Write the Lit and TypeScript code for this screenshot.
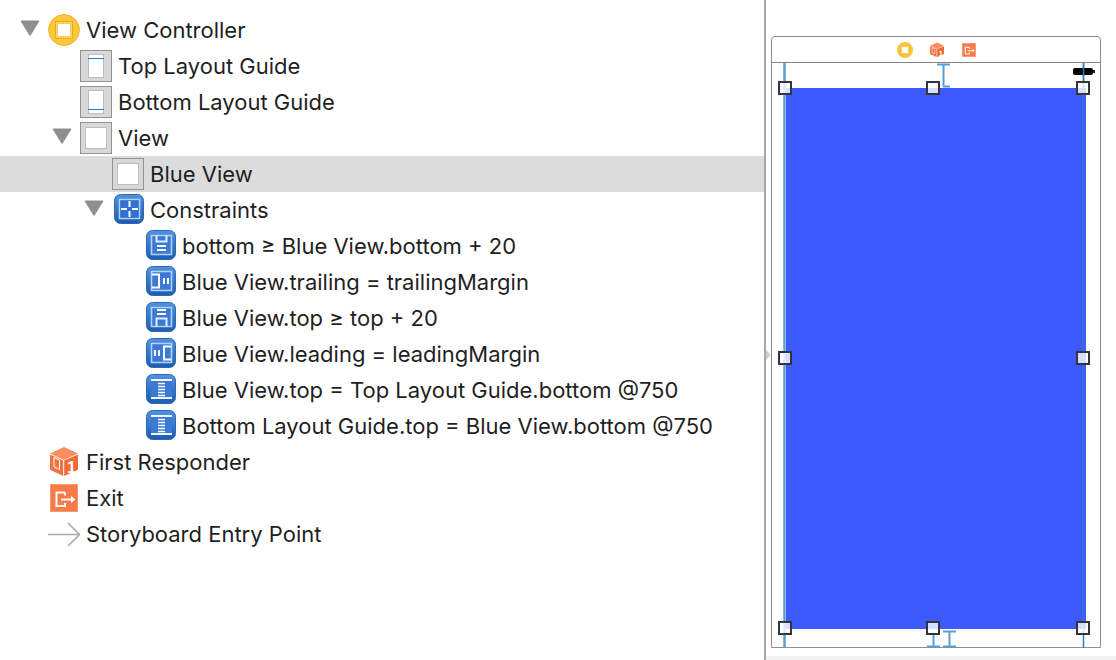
import { LitElement, css, html, svg } from 'lit';
import { customElement } from 'lit/decorators.js';

const blue = (inner: unknown) => html`<svg class="icon" viewBox="0 0 32 32" aria-hidden="true">
  <defs>
    <linearGradient id="bg" x1="0" y1="0" x2="0" y2="1">
      <stop offset="0" stop-color="#4f93e2" />
      <stop offset="1" stop-color="#1d5cae" />
    </linearGradient>
  </defs>
  <rect x="2.5" y="0.5" width="29" height="29" rx="6" fill="url(#bg)" stroke="#2a69ba" />
  <rect x="7" y="5" width="21" height="20" fill="#3a7ad6" />
  ${inner}
</svg>`;

const FRAME = svg`<path d="M7.5 5.500h20v19h-20z" fill="none" stroke="#b5d0f0" stroke-width="1.600" />`;

const CONSTRAINT_ICONS: Record<string, unknown> = {
  plus: svg`
    ${FRAME}
    <rect x="8.500" y="6.500" width="18" height="17" fill="#2f72cf" />
    <path d="M17.500 7v6M17.500 17v6M9 15h6M20 15h6" stroke="#fff" stroke-width="2" fill="none" />`,
  bottomGe: svg`
    ${FRAME}
    <path d="M12.500 5.500v6h10v-6" fill="none" stroke="#e4eefb" stroke-width="2" />
    <path d="M13 16h9M13 20h9" stroke="#fff" stroke-width="2" />`,
  topGe: svg`
    ${FRAME}
    <path d="M13 8h9M13 12h9" stroke="#fff" stroke-width="2" />
    <path d="M12.500 24.500v-8h10v8" fill="none" stroke="#e4eefb" stroke-width="2" />`,
  trailing: svg`
    ${FRAME}
    <path d="M8 8.500h7v13h-7" fill="none" stroke="#fff" stroke-width="2" />
    <path d="M20 12v6M24 12v6" stroke="#fff" stroke-width="2" />`,
  leading: svg`
    ${FRAME}
    <path d="M27 8.500h-7v13h7" fill="none" stroke="#fff" stroke-width="2" />
    <path d="M11 12v6M15 12v6" stroke="#fff" stroke-width="2" />`,
  beam: svg`
    <path d="M7 6h21M7 24h21" stroke="#f2f7fd" stroke-width="2" />
    <path d="M14 9.500h7M14 12.500h7M14 15.500h7M14 18.500h7M14 21.500h7" stroke="#fff" stroke-width="1.400" />`,
};

const grayBox = (inner: unknown) => html`<svg class="icon" viewBox="0 0 32 32" aria-hidden="true">
  <rect x="0.500" y="0.500" width="31" height="31" fill="#d8d8d8" stroke="#929292" />
  ${inner}
</svg>`;

const viewIcon = grayBox(svg`<rect x="5.500" y="5.500" width="21" height="21" fill="#fff" stroke="#bcbcbc" />`);
const topGuide = grayBox(svg`<rect x="8.500" y="4.500" width="15" height="23" fill="#fff" stroke="#bcbcbc" /><path d="M8 8.500h16" stroke="#2d76b8" />`);
const bottomGuide = grayBox(svg`<rect x="8.500" y="4.500" width="15" height="23" fill="#fff" stroke="#bcbcbc" /><path d="M8 23.500h16" stroke="#2d76b8" />`);

const controllerIcon = html`<svg class="icon" viewBox="0 0 32 32" aria-hidden="true">
  <circle cx="16" cy="16" r="15.400" fill="#fdc936" stroke="#eeae33" />
  <rect x="7.500" y="7.500" width="17" height="17" fill="#fcd55f" stroke="#e6aa2c" />
  <rect x="9.500" y="9.500" width="13" height="13" fill="#fff" stroke="#eeb02f" stroke-dasharray="1.500 1" />
</svg>`;

const cubeIcon = html`<svg class="icon" viewBox="0 0 32 32" aria-hidden="true">
  <path d="M16 1l14 6.500-14 6.500-14-6.500z" fill="#fb8d60" />
  <path d="M2 8.500l13.200 6.100v15.400l-13.200-6.200z" fill="#f6733f" />
  <path d="M30 8.500l-13.800 6.100v15.400l13.800-6.200z" fill="#f26a36" />
  <path d="M6 11.500l5.500 2.600v9.400l-5.500-2.600z" fill="none" stroke="#fff" />
  <text x="19" y="27" font-size="16" font-weight="700" fill="#fff" font-family="Liberation Sans, sans-serif">1</text>
</svg>`;

const exitIcon = html`<svg class="icon" viewBox="0 0 32 32" aria-hidden="true">
  <rect x="2.500" y="2.500" width="27" height="27" fill="#f87a49" stroke="#fb9a70" />
  <path d="M17 10.500h-8.500v13.500h8.500v-3M17 10.500v3" fill="none" stroke="#fff" stroke-width="2" />
  <path d="M13 17.500h11" stroke="#fff" stroke-width="2" />
  <path d="M23 14l4.500 3.500-4.500 3.500z" fill="#fff" />
</svg>`;

const entryIcon = html`<svg class="icon" viewBox="0 0 32 32" aria-hidden="true">
  <path d="M0 16.500h31M20 5l11.500 11.500-11.500 11.500" fill="none" stroke="#ababab" stroke-width="1.600" />
</svg>`;

interface Row {
  depth: number;
  label: string;
  icon: unknown;
  open?: boolean;
  selected?: boolean;
}

const ROWS: Row[] = [
  { depth: 0, label: 'View Controller', icon: controllerIcon, open: true },
  { depth: 1, label: 'Top Layout Guide', icon: topGuide },
  { depth: 1, label: 'Bottom Layout Guide', icon: bottomGuide },
  { depth: 1, label: 'View', icon: viewIcon, open: true },
  { depth: 2, label: 'Blue View', icon: viewIcon, selected: true },
  { depth: 2, label: 'Constraints', icon: blue(CONSTRAINT_ICONS.plus), open: true },
  { depth: 3, label: 'bottom ≥ Blue View.bottom + 20', icon: blue(CONSTRAINT_ICONS.bottomGe) },
  { depth: 3, label: 'Blue View.trailing = trailingMargin', icon: blue(CONSTRAINT_ICONS.trailing) },
  { depth: 3, label: 'Blue View.top ≥ top + 20', icon: blue(CONSTRAINT_ICONS.topGe) },
  { depth: 3, label: 'Blue View.leading = leadingMargin', icon: blue(CONSTRAINT_ICONS.leading) },
  { depth: 3, label: 'Blue View.top = Top Layout Guide.bottom @750', icon: blue(CONSTRAINT_ICONS.beam) },
  { depth: 3, label: 'Bottom Layout Guide.top = Blue View.bottom @750', icon: blue(CONSTRAINT_ICONS.beam) },
  { depth: 0, label: 'First Responder', icon: cubeIcon },
  { depth: 0, label: 'Exit', icon: exitIcon },
  { depth: 0, label: 'Storyboard Entry Point', icon: entryIcon },
];

// handle positions, relative to the canvas (x from 766, y from 0)
const HANDLES = [
  [19, 88], [167, 88], [317, 88],
  [19, 358], [317, 358],
  [19, 628], [167, 628], [317, 628],
];

@customElement('app-root')
export class AppRoot extends LitElement {
  static styles = css`
    :host {
      display: block;
      width: 1116px;
      height: 660px;
      overflow: hidden;
      background: #fff;
      font-family: Inter, "Liberation Sans", sans-serif;
      color: #1f1f1f;
    }

    .page {
      display: grid;
      grid-template-columns: 764px 2px 1fr;
      height: 660px;
    }

    .tree {
      padding-top: 12px;
    }

    .row {
      display: flex;
      align-items: center;
      height: 36px;
      box-sizing: border-box;
    }

    .row.selected {
      background: #dcdcdc;
    }

    .twisty {
      width: 32px;
      height: 32px;
      flex: none;
    }

    .icon {
      width: 32px;
      height: 32px;
      flex: none;
      display: block;
    }

    .label {
      margin-left: 6px;
      font-size: 22px;
      white-space: nowrap;
    }

    .divider {
      background: #a8a8a8;
    }

    .canvas {
      position: relative;
      padding: 36px 15px 0 5px;
    }

    .band {
      position: absolute;
      left: 0;
      right: 0;
      top: 656px;
      bottom: 0;
      background: #f2f2f2;
    }

    .grip {
      position: absolute;
      left: 0;
      top: 350px;
      border-left: 5px solid #cfcfcf;
      border-top: 5px solid transparent;
      border-bottom: 5px solid transparent;
    }

    .frame {
      box-sizing: border-box;
      width: 330px;
      height: 612px;
      border: 1.5px solid #8f8f8f;
      border-top-width: 1px;
      border-radius: 4px 4px 0 0;
      display: flex;
      flex-direction: column;
    }

    .dock {
      height: 25px;
      flex: none;
      border-bottom: 1.5px solid #858585;
    }

    .dock-icons {
      display: flex;
      align-items: center;
      justify-content: center;
      gap: 16px;
      height: 100%;
      padding-left: 2px;
      filter: blur(0.3px);
    }

    .dock-icons .icon {
      width: 16px;
      height: 16px;
    }

    .screen {
      flex: 1;
      padding: 25px 14px 18px 14px;
    }

    .blue {
      height: 100%;
      background: #3d5afe;
    }

    .overlay {
      position: absolute;
      inset: 0;
      width: 100%;
      height: 100%;
      pointer-events: none;
      filter: blur(0.3px);
    }

    .handle {
      position: absolute;
      box-sizing: border-box;
      width: 14px;
      height: 14px;
      margin: -7px 0 0 -7px;
      border: 2px solid #34343c;
      background: rgba(255, 255, 255, 0.8);
      filter: blur(0.4px);
    }
  `;

  private renderRow(row: Row) {
    return html`
      <div
        class="row ${row.selected ? 'selected' : ''}"
        style="padding-left:${16 + row.depth * 32}px"
      >
        <div class="twisty">
          ${row.open
            ? html`<svg class="icon" viewBox="0 0 32 32" aria-hidden="true">
                <path d="M5 7h18l-9 14.500z" fill="#8e8e8e" stroke="#8e8e8e" stroke-linejoin="round" />
              </svg>`
            : ''}
        </div>
        ${row.icon}
        <span class="label">${row.label}</span>
      </div>
    `;
  }

  render() {
    return html`
      <div class="page">
        <div class="tree">${ROWS.map((row) => this.renderRow(row))}</div>
        <div class="divider"></div>
        <div class="canvas">
          <div class="band"></div>
          <div class="grip"></div>
          <div class="frame">
            <div class="dock">
              <div class="dock-icons">${controllerIcon}${cubeIcon}${exitIcon}</div>
            </div>
            <div class="screen"><div class="blue"></div></div>
          </div>
          <svg class="overlay" viewBox="0 0 350 660" aria-hidden="true">
            <path d="M18.500 63v585" stroke="#5c9dd2" stroke-width="2.500" fill="none" />
            <path d="M317.500 63v585" stroke="#2f7cba" stroke-width="1.500" fill="none" />
            <path d="M171 64.500h13M177.500 64v22M177 86.500h7" stroke="#5c9dd2" stroke-width="2" fill="none" />
            <path d="M177 631.500h13M183.500 631v15M177 646.500h13" stroke="#5c9dd2" stroke-width="2" fill="none" />
            <path d="M161 646.500h13M167.500 634v12" stroke="#5c9dd2" stroke-width="2" fill="none" />
            <rect x="307" y="68" width="20" height="7" rx="2" fill="#000" />
            <rect x="327" y="70" width="2" height="3" fill="#222" />
            <path d="M317.500 63v26" stroke="#2f7cba" stroke-width="1.500" fill="none" />
          </svg>
          ${HANDLES.map(
            ([x, y]) => html`<div class="handle" style="left:${x}px;top:${y}px"></div>`
          )}
        </div>
      </div>
    `;
  }
}
